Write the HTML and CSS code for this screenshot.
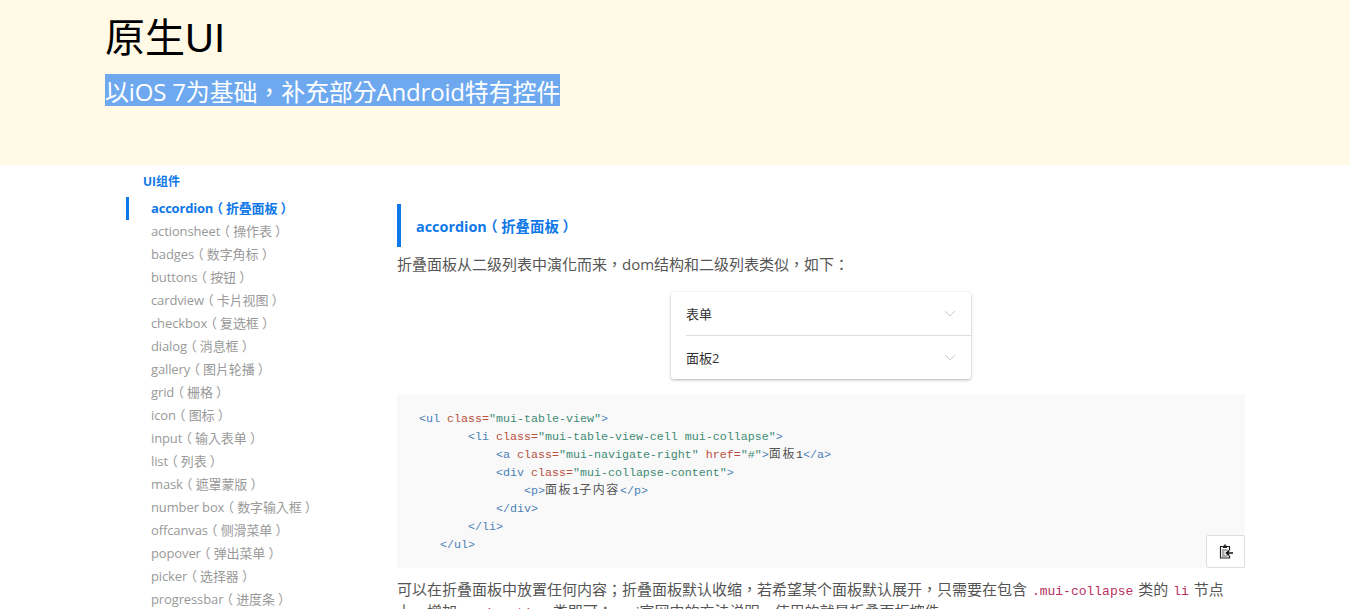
FILE: index.html
```html
<!DOCTYPE html>
<html lang="zh-TW">
<head>
<meta charset="utf-8">
<title>原生UI</title>
<link rel="stylesheet" href="styles.css">
</head>
<body>
<header class="hero">
  <h1 class="hero-title">原生UI</h1>
  <p class="hero-sub"><span class="selected">以iOS 7为基础，补充部分Android特有控件</span></p>
</header>
<div class="layout">
  <nav class="side">
    <div class="side-head">UI组件</div>
    <ul class="side-list">
      <li class="side-item active">accordion<span class="pn">（</span>折叠面板<span class="pn">）</span></li>
      <li class="side-item">actionsheet<span class="pn">（</span>操作表<span class="pn">）</span></li>
      <li class="side-item">badges<span class="pn">（</span>数字角标<span class="pn">）</span></li>
      <li class="side-item">buttons<span class="pn">（</span>按钮<span class="pn">）</span></li>
      <li class="side-item">cardview<span class="pn">（</span>卡片视图<span class="pn">）</span></li>
      <li class="side-item">checkbox<span class="pn">（</span>复选框<span class="pn">）</span></li>
      <li class="side-item">dialog<span class="pn">（</span>消息框<span class="pn">）</span></li>
      <li class="side-item">gallery<span class="pn">（</span>图片轮播<span class="pn">）</span></li>
      <li class="side-item">grid<span class="pn">（</span>栅格<span class="pn">）</span></li>
      <li class="side-item">icon<span class="pn">（</span>图标<span class="pn">）</span></li>
      <li class="side-item">input<span class="pn">（</span>输入表单<span class="pn">）</span></li>
      <li class="side-item">list<span class="pn">（</span>列表<span class="pn">）</span></li>
      <li class="side-item">mask<span class="pn">（</span>遮罩蒙版<span class="pn">）</span></li>
      <li class="side-item">number box<span class="pn">（</span>数字输入框<span class="pn">）</span></li>
      <li class="side-item">offcanvas<span class="pn">（</span>侧滑菜单<span class="pn">）</span></li>
      <li class="side-item">popover<span class="pn">（</span>弹出菜单<span class="pn">）</span></li>
      <li class="side-item">picker<span class="pn">（</span>选择器<span class="pn">）</span></li>
      <li class="side-item">progressbar<span class="pn">（</span>进度条<span class="pn">）</span></li>
    </ul>
  </nav>
  <main class="content">
    <h2 class="section-title">accordion<span class="pn">（</span>折叠面板<span class="pn">）</span></h2>
    <p class="para intro">折叠面板从二级列表中演化而来，dom结构和二级列表类似，如下：</p>
    <div class="demo">
      <div class="demo-row"><span>表单</span><svg class="chev" width="12" height="7" viewBox="0 0 12 7"><path d="M1 1l5 5 5-5" fill="none" stroke="#c8c8c8" stroke-width="1"/></svg></div>
      <div class="demo-row"><span>面板2</span><svg class="chev" width="12" height="7" viewBox="0 0 12 7"><path d="M1 1l5 5 5-5" fill="none" stroke="#c8c8c8" stroke-width="1"/></svg></div>
    </div>
    <div class="code-box">
<pre class="code"><span class="t">&lt;ul</span> <span class="a">class=</span><span class="s">"mui-table-view"</span><span class="t">&gt;</span>
       <span class="t">&lt;li</span> <span class="a">class=</span><span class="s">"mui-table-view-cell mui-collapse"</span><span class="t">&gt;</span>
           <span class="t">&lt;a</span> <span class="a">class=</span><span class="s">"mui-navigate-right"</span> <span class="a">href=</span><span class="s">"#"</span><span class="t">&gt;</span><span class="x">面板</span>1<span class="t">&lt;/a&gt;</span>
           <span class="t">&lt;div</span> <span class="a">class=</span><span class="s">"mui-collapse-content"</span><span class="t">&gt;</span>
               <span class="t">&lt;p&gt;</span><span class="x">面板</span>1<span class="x">子内容</span><span class="t">&lt;/p&gt;</span>
           <span class="t">&lt;/div&gt;</span>
       <span class="t">&lt;/li&gt;</span>
   <span class="t">&lt;/ul&gt;</span></pre>
      <button class="copy" type="button" aria-label="复制">
        <svg width="14" height="15" viewBox="0 0 14 15"><path d="M4 2.5H1.5V14H10.5V11.5M10.5 6.5V2.5H8" fill="none" stroke="#222" stroke-width="1.2"/><path d="M4 4V1.8H5.2V.6H6.8V1.8H8V4Z" fill="#222"/><path d="M3 6H8.5M3 8H5.5M3 10H5.5M3 12H8.5" stroke="#444" stroke-width=".9"/><path d="M14 9H7.5M10 6.6L7.4 9l2.6 2.4" fill="none" stroke="#111" stroke-width="1.5"/></svg>
      </button>
    </div>
    <p class="para">可以在折叠面板中放置任何内容；折叠面板默认收缩，若希望某个面板默认展开，只需要在包含 <code class="ic">.mui-collapse</code> 类的 <code class="ic">li</code> 节点上，增加 <code class="ic">.mui-active</code> 类即可；mui官网中的方法说明，使用的就是折叠面板控件</p>
  </main>
</div>
</body>
</html>
```
FILE: styles.css
```css
* { box-sizing: border-box; }
html, body { margin: 0; height: 609px; overflow: hidden; }
body {
  background: #fff;
  font-family: "Open Sans", "Noto Sans CJK TC", sans-serif;
  color: #555;
}
.hero {
  height: 165px;
  background: #fff9e6;
  padding: 12px 0 0 105px;
}
.hero-title {
  margin: 0;
  font-size: 40px;
  line-height: 52px;
  font-weight: 400;
  color: #000;
  font-family: "Liberation Sans", "Noto Sans CJK SC", sans-serif;
}
.hero-sub {
  margin: 10px 0 0;
  font-size: 24px;
  line-height: 32px;
}
.selected {
  display: inline-block;
  background: #6ea9f0;
  color: #fff;
  height: 32px;
  line-height: 36px;
  letter-spacing: -.17px;
}
.pn {
  font-feature-settings: "halt";
  margin: 0 .25em;
}
.layout {
  display: flex;
  padding-left: 126px;
}
.side { width: 271px; flex: none; padding-top: 7px; }
.side-head {
  padding-left: 17px;
  font-size: 12px;
  line-height: 20px;
  font-weight: 700;
  color: #0f78e8;
}
.side-list { list-style: none; margin: 5px 0 0; padding: 0; }
.side-item {
  height: 23px;
  line-height: 23px;
  padding-left: 25px;
  font-size: 13px;
  letter-spacing: -.12px;
  color: #999;
  white-space: nowrap;
}
.side-item.active {
  border-left: 3px solid #0f78e8;
  padding-left: 22px;
  letter-spacing: -.2px;
  color: #0f78e8;
  font-weight: 700;
}
.content { width: 848px; flex: none; padding-top: 39px; }
.section-title {
  margin: 0;
  height: 43px;
  line-height: 45px;
  border-left: 4px solid #0f78e8;
  padding-left: 15px;
  font-size: 14.4px;
  font-weight: 700;
  color: #0f78e8;
}
.para {
  margin: 0;
  font-size: 15px;
  line-height: 22px;
  color: #555;
}
.intro { margin-top: 6px; }
.demo {
  width: 300px;
  margin: 17px auto 0;
  background: #fff;
  border-radius: 3px;
  box-shadow: 0 1px 3px rgba(0, 0, 0, .3);
  padding-left: 15px;
}
.demo-row {
  height: 43px;
  display: flex;
  align-items: center;
  justify-content: space-between;
  padding-right: 15px;
  font-size: 13px;
  color: #333;
}
.demo-row + .demo-row { border-top: 1px solid #ddd; height: 44px; }
.code-box {
  position: relative;
  margin-top: 15px;
  height: 174px;
  background: #f9f9fa;
  padding: 16px 22px 0;
}
.code {
  margin: 0;
  font-family: "Liberation Mono", "Noto Sans CJK TC", monospace;
  font-size: 11.67px;
  line-height: 18px;
  color: #444;
}
.t { color: #4a7fb5; }
.a { color: #b8503c; }
.s { color: #3f8a74; }
.x { color: #555; font-size: 12px; letter-spacing: 1.6px; line-height: 1; }
.copy {
  position: absolute;
  right: 0;
  bottom: 0;
  width: 39px;
  height: 33px;
  padding: 0;
  display: flex;
  align-items: center;
  justify-content: center;
  background: #fff;
  border: 1px solid #ddd;
  border-radius: 2px;
}
.ic {
  font-family: "Liberation Mono", monospace;
  font-size: 13px;
  line-height: 1;
  padding: 0 1px;
  color: #b7305f;
}
.code-box + .para { margin-top: 10px; }
```
